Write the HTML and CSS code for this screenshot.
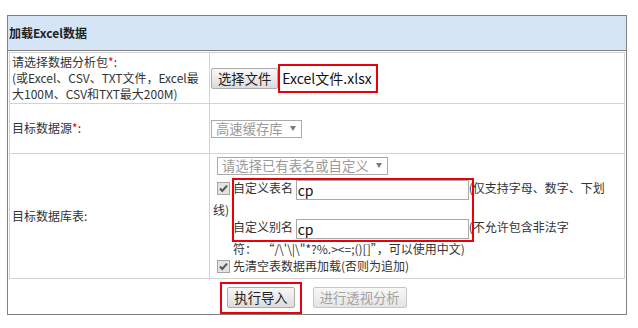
FILE: index.html
```html
<!DOCTYPE html>
<html lang="zh-CN">
<head>
  <meta charset="UTF-8" />
  <title>加载Excel数据</title>
  <link rel="stylesheet" href="styles.css">
</head>
<body>

  <div class="panel">
    <div class="panel-title">加载Excel数据</div>

    <table class="form">
      <colgroup>
        <col class="col-label">
        <col>
      </colgroup>

      <!-- file -->
      <tr class="row-file">
        <td class="label">请选择数据分析包<span class="req">*</span>:<br>(或Excel、CSV、TXT文件，Excel最大100M、CSV和TXT最大200M)</td>
        <td class="field">
          <button class="btn" type="button">选择文件</button><span class="file-name">Excel文件.xlsx</span>
        </td>
      </tr>

      <!-- source -->
      <tr class="row-source">
        <td class="label">目标数据源<span class="req">*</span>:</td>
        <td class="field">
          <span class="select select-source">
            <select disabled><option>高速缓存库</option></select>
          </span>
        </td>
      </tr>

      <!-- target table -->
      <tr class="row-table">
        <td class="label">目标数据库表:</td>
        <td class="field">
          <div class="opts">
            <span class="select select-table">
              <select disabled><option>请选择已有表名或自定义</option></select>
            </span>
            <div class="opt-line">
              <span class="check"><svg width="13" height="13" viewBox="0 0 13 13"><rect x="0.5" y="0.5" width="12" height="12" fill="#e4e4e4" stroke="#a6a6a6"/><path d="M3 6.5 L5.3 9 L10 3.6" fill="none" stroke="#555" stroke-width="2"/></svg></span><label>自定义表名</label> <input class="text" type="text" value="cp"><span class="hint">(仅支持字母、数字、下划线)</span>
            </div>
            <div class="opt-line indent">
              <label>自定义别名</label> <input class="text" type="text" value="cp"><span class="hint">(不允许包含非法字<span class="nowrap">符：&nbsp; “/\'\|\"*?%.&gt;&lt;=;()[]”</span>，可以使用中文)</span>
            </div>
            <div class="opt-line">
              <span class="check"><svg width="13" height="13" viewBox="0 0 13 13"><rect x="0.5" y="0.5" width="12" height="12" fill="#e4e4e4" stroke="#a6a6a6"/><path d="M3 6.5 L5.3 9 L10 3.6" fill="none" stroke="#555" stroke-width="2"/></svg></span>先清空表数据再加载(否则为追加)
            </div>
            <span class="mark mark-names"></span>
          </div>
        </td>
      </tr>
    </table>

    <div class="actions">
      <span class="mark-wrap">
        <button class="btn" type="button">执行导入</button>
        <span class="mark mark-run"></span>
      </span>
      <button class="btn" type="button" disabled>进行透视分析</button>
    </div>
  </div>

</body>
</html>
```

FILE: styles.css
```css
body {
  margin: 0;
  background: #fff;
  font-family: "Microsoft YaHei", "Noto Sans CJK SC", sans-serif;
  font-size: 12px;
  color: #333;
}

.panel {
  width: 618px;
  margin: 15px 0 0 7px;
  border: 1px solid #808080;
}

.panel-title {
  height: 34px;
  line-height: 34px;
  padding-left: 1px;
  background: #d5e5f6;
  border-bottom: 1px solid #808080;
  font-weight: bold;
  color: #222;
}

.form {
  width: 616px;
  margin: 1px;
  border-collapse: collapse;
}

.form td {
  border: 1px solid #d3d3d3;
  vertical-align: middle;
}

.col-label {
  width: 200px;
}

.label {
  padding: 1px 2px;
  line-height: 16px;
}

.req {
  color: #e00;
}

.field {
  padding: 0 1px;
  line-height: 16px;
}

.row-source .label {
  padding-top: 16px;
  padding-bottom: 17px;
}

/* buttons */
.btn {
  height: 21px;
  padding: 0 6px;
  border: 1px solid #adadad;
  border-radius: 2px;
  background: linear-gradient(#f8f8f8, #dcdcdc);
  font-family: "Microsoft YaHei", "Noto Sans CJK SC", sans-serif;
  font-size: 13.33px;
  line-height: 19px;
  color: #222;
  vertical-align: middle;
}

.btn[disabled] {
  color: #a3a3a3;
  border-color: #c6c6c6;
  background: linear-gradient(#f8f8f8, #e4e4e4);
}

.file-name {
  display: inline-block;
  box-sizing: border-box;
  width: 100px;
  height: 29px;
  padding: 0 2px;
  border: 2px solid #e8000b;
  font-size: 14px;
  line-height: 25px;
  color: #111;
  vertical-align: middle;
}

/* selects */
.select {
  position: relative;
  display: inline-block;
  vertical-align: middle;
}

.select select {
  display: block;
  appearance: none;
  box-sizing: border-box;
  height: 18px;
  padding: 0 0 0 4px;
  border: 1px solid #aaa;
  border-radius: 0;
  background: #fff;
  font-family: "Microsoft YaHei", "Noto Sans CJK SC", sans-serif;
  font-size: 13.33px;
  line-height: 16px;
  color: #9a9a9a;
  opacity: 1;
}

.select::after {
  content: "";
  position: absolute;
  top: 6px;
  right: 6px;
  border-left: 3.5px solid transparent;
  border-right: 3.5px solid transparent;
  border-top: 5px solid #7a7a7a;
}

.select-source select {
  width: 91px;
}

.select-table select {
  width: 171px;
}

/* target table options */
.opts {
  position: relative;
  padding: 3px 8px 4px 2px;
  line-height: 17px;
}

.select-table {
  display: block;
  width: 171px;
  margin: 0 0 4px 4px;
}

.indent {
  padding-left: 20px;
}

.check {
  display: inline-block;
  margin: 0 3px 0 4px;
  vertical-align: -2px;
}

.check svg {
  display: block;
}

.text {
  box-sizing: border-box;
  width: 173px;
  height: 20px;
  margin: 1px 0;
  padding: 0 1px;
  border: 1px solid #a9a9a9;
  font-family: "Microsoft YaHei", "Noto Sans CJK SC", sans-serif;
  font-size: 14px;
  color: #111;
  vertical-align: middle;
}

.nowrap {
  white-space: nowrap;
}

/* annotation marks */
.mark {
  position: absolute;
  border: 2px solid #e8000b;
  pointer-events: none;
}

.mark-names {
  top: 24px;
  left: 21px;
  width: 238px;
  height: 60px;
}

.actions {
  display: flex;
  justify-content: center;
  gap: 18px;
  padding: 7px 0 6px;
}

.mark-wrap {
  position: relative;
  display: inline-flex;
}

.mark-run {
  inset: -5px -7px -6px -7px;
}
```
